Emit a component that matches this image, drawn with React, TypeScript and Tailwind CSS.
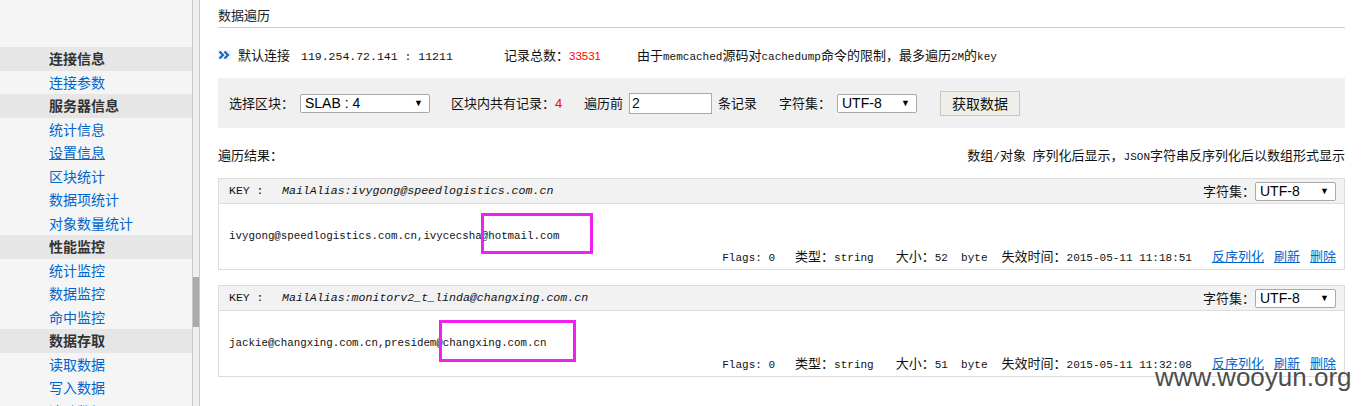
const CJK = /([\u2e80-\u9fff\uff00-\uffef\u3000-\u303f]+)/;

type MixedProps = {
  text: string;
  cjk?: string;
  latin?: string;
};

// SimSun-like mixing: CJK runs in Noto, latin runs in a mono font at half width
function Mixed({ text, cjk = "text-[13px]", latin = "text-[11px]" }: MixedProps) {
  const parts = text.split(CJK).filter(Boolean);
  return (
    <>
      {parts.map((p, i) =>
        CJK.test(p) ? (
          <span key={i} className={`font-['Noto_Sans_CJK_SC',sans-serif] ${cjk}`}>
            {p}
          </span>
        ) : (
          <span key={i} className={`whitespace-pre font-['Liberation_Mono',monospace] ${latin}`}>
            {p}
          </span>
        ),
      )}
    </>
  );
}

type NavItem = { label: string; head?: boolean; underline?: boolean };

const navItems: NavItem[] = [
  { label: "连接信息", head: true },
  { label: "连接参数" },
  { label: "服务器信息", head: true },
  { label: "统计信息" },
  { label: "设置信息", underline: true },
  { label: "区块统计" },
  { label: "数据项统计" },
  { label: "对象数量统计" },
  { label: "性能监控", head: true },
  { label: "统计监控" },
  { label: "数据监控" },
  { label: "命中监控" },
  { label: "数据存取", head: true },
  { label: "读取数据" },
  { label: "写入数据" },
  { label: "清除数据" },
];

function Sidebar() {
  return (
    <div className="flex h-full shrink-0">
      <div className="h-full w-[192px] bg-[#f5f5f5] pt-[47px] font-['Noto_Sans_CJK_SC',sans-serif] text-[14px]">
        {navItems.map((item) => (
          <div
            key={item.label}
            className={`h-[23.5px] pl-[49px] leading-[23.5px] ${
              item.head ? "bg-[#e6e6e6] font-bold text-[#333]" : "text-[#0066cc]"
            } ${item.underline ? "underline" : ""}`}
          >
            {item.label}
          </div>
        ))}
      </div>
      <div className="h-full w-[8px] border-x border-[#c8c8c8] bg-[#efefef]">
        <div className="mt-[277px] h-[50px] bg-[#ababab]" />
      </div>
    </div>
  );
}

function FakeSelect({ value, width }: { value: string; width: string }) {
  return (
    <div
      className={`flex h-[19px] items-center justify-between rounded-[2px] border border-[#a9a9a9] bg-white pl-[4px] pr-[6px] font-['Liberation_Sans',sans-serif] text-[14px] leading-none text-black ${width}`}
    >
      <span>{value}</span>
      <span className="text-[9px]">▼</span>
    </div>
  );
}

type Row = {
  keyName: string;
  value: string;
  flags: string;
  type: string;
  size: string;
  expire: string;
};

const rows: Row[] = [
  {
    keyName: "MailAlias:ivygong@speedlogistics.com.cn",
    value: "ivygong@speedlogistics.com.cn,ivycecsha@hotmail.com",
    flags: "0",
    type: "string",
    size: "52",
    expire: "2015-05-11 11:18:51",
  },
  {
    keyName: "MailAlias:monitorv2_t_linda@changxing.com.cn",
    value: "jackie@changxing.com.cn,presidem@changxing.com.cn",
    flags: "0",
    type: "string",
    size: "51",
    expire: "2015-05-11 11:32:08",
  },
];

function ResultBox({ row, first }: { row: Row; first?: boolean }) {
  return (
    <div className={`border border-[#dddddd] ${first ? "mt-[13px]" : "mt-[15px]"}`}>
      <div className="flex h-[25px] items-center justify-between border-b border-[#dddddd] bg-[#f2f2f2] pl-[10px] pr-[8px]">
        <div className="flex items-center">
          <span className="w-[53px] whitespace-pre font-['Liberation_Mono',monospace] text-[11.5px]">KEY :</span>
          <span className="font-['Liberation_Mono',monospace] text-[11.6px] italic">{row.keyName}</span>
        </div>
        <div className="flex items-center">
          <span className="text-[13px]">字符集：</span>
          <FakeSelect value="UTF-8" width="w-[81px]" />
        </div>
      </div>
      <div className="h-[65px] pl-[10px] pr-[8px] pt-[20px]">
        <div className="h-[16px] leading-[16px]">
          <Mixed text={row.value} latin="text-[10.8px]" />
        </div>
        <div className="mt-[8px] flex h-[16px] items-center justify-end leading-[16px]">
          <span>
            <Mixed text={`Flags: ${row.flags}`} />
          </span>
          <span className="ml-[20px]">
            <Mixed text={`类型：${row.type}`} />
          </span>
          <span className="ml-[22px]">
            <Mixed text={`大小：${row.size}  byte`} />
          </span>
          <span className="ml-[14px]">
            <Mixed text={`失效时间：${row.expire}`} />
          </span>
          <a className="ml-[20px] text-[13px] text-[#0066cc] underline">反序列化</a>
          <a className="ml-[10px] text-[13px] text-[#0066cc] underline">刷新</a>
          <a className="ml-[10px] text-[13px] text-[#0066cc] underline">删除</a>
        </div>
      </div>
    </div>
  );
}

export default function App() {
  return (
    <div className="relative flex h-[406px] w-[1361px] overflow-hidden bg-white font-['Noto_Sans_CJK_SC',sans-serif] text-[#111]">
      <Sidebar />

      <div className="min-w-0 flex-1 pl-[18px] pr-[16px]">
        <div className="h-[28px] border-b border-[#cccccc] pt-[8px] text-[13px] leading-[14px] text-[#222]">
          数据遍历
        </div>

        <div className="mt-[16px] flex h-[22px] items-center text-[13px]">
          <svg width="13" height="10" viewBox="0 0 13 10" className="bg-[#eef2f8]">
            <path d="M1.5 1.5 L5 5 L1.5 8.5" fill="none" stroke="#1a64c0" strokeWidth="2.2" />
            <path d="M6.5 1.5 L10 5 L6.5 8.5" fill="none" stroke="#1a64c0" strokeWidth="2.2" />
          </svg>
          <span className="ml-[7px] w-[63px]">默认连接</span>
          <span className="w-[203px]">
            <Mixed text="119.254.72.141 : 11211" latin="text-[11.5px]" />
          </span>
          <span className="w-[133px]">
            记录总数：
            <span className="font-['Liberation_Sans',sans-serif] text-[11.5px] text-[#ff0000]">33531</span>
          </span>
          <span>
            <Mixed text="由于memcached源码对cachedump命令的限制，最多遍历2M的key" />
          </span>
        </div>

        <div className="mt-[12px] flex h-[50px] items-center bg-[#f0f0f0] pl-[11px] text-[13px]">
          <span className="w-[71px]">选择区块：</span>
          <FakeSelect value="SLAB : 4" width="w-[130px]" />
          <span className="ml-[21px] w-[133px]">
            区块内共有记录：
            <span className="font-['Liberation_Sans',sans-serif] text-[13px] text-[#ff0000]">4</span>
          </span>
          <span className="w-[45px]">遍历前</span>
          <div className="flex h-[21px] w-[83px] items-center border border-[#a9a9a9] bg-white pl-[2px] font-['Liberation_Sans',sans-serif] text-[14px]">
            2
          </div>
          <span className="ml-[6px] w-[61px]">条记录</span>
          <span className="w-[58px]">字符集：</span>
          <FakeSelect value="UTF-8" width="w-[80px]" />
          <button className="ml-[23px] h-[25px] w-[80px] border border-[#c8c8c0] bg-[#efefe9] text-[14px] text-[#111]">
            获取数据
          </button>
        </div>

        <div className="mt-[17px] flex h-[20px] items-center justify-between leading-[20px]">
          <span className="text-[13px]">遍历结果：</span>
          <span>
            <Mixed text="数组/对象 序列化后显示，JSON字符串反序列化后以数组形式显示" />
          </span>
        </div>

        {rows.map((row, i) => (
          <ResultBox key={row.keyName} row={row} first={i === 0} />
        ))}
      </div>

      {/* annotation boxes drawn over the screenshot */}
      <div className="absolute left-[481px] top-[213px] h-[41px] w-[112px] border-[3px] border-[#f020f0]" />
      <div className="absolute left-[439px] top-[320px] h-[42px] w-[137px] border-[3px] border-[#f020f0]" />

      <div className="absolute left-[1155px] top-[364px] font-['Liberation_Sans',sans-serif] text-[26px] leading-none text-[#4d4d4d] [text-shadow:0_0_2px_#fff]">
        www.wooyun.org
      </div>
    </div>
  );
}
